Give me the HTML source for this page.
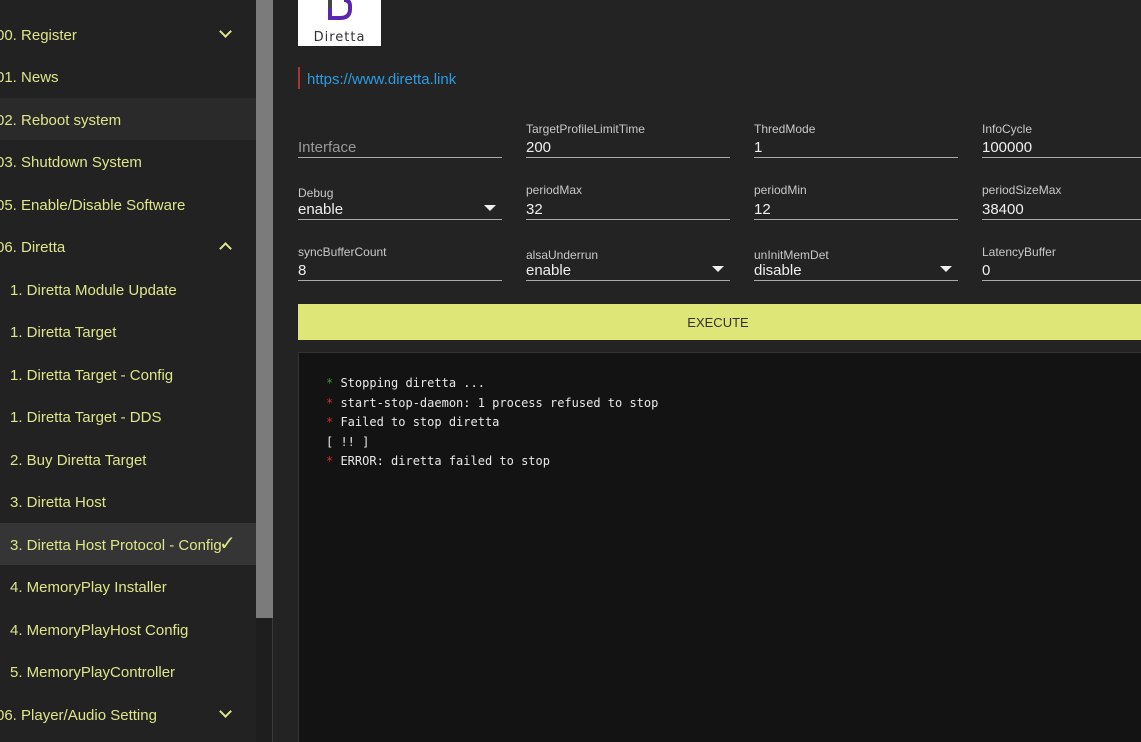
<!DOCTYPE html>
<html><head><style>
*{margin:0;padding:0;box-sizing:border-box}
html,body{width:1141px;height:742px;overflow:hidden}
body{background:#232323;font-family:"Liberation Sans",sans-serif;position:relative}
.sb{position:absolute;left:0;top:0;width:256px;height:742px;background:#222}
.it{position:absolute;left:0;width:256px;height:42px;color:#dfe58a;font-size:15px;line-height:46px;white-space:nowrap}
.chev{position:absolute;left:221px;width:9px;height:9px;border-right:2px solid #dfe58a;border-bottom:2px solid #dfe58a}
.scr{position:absolute;left:256px;top:0;width:17px;height:742px;background:#1e1e1e;border-right:1px solid #3a3a3a}
.thumb{position:absolute;left:256px;top:0;width:17px;height:618px;background:#7b7b7b}
.f{position:absolute;width:204px;border-bottom:1px solid #aaa;color:#eee}
.lab{font-size:12px;color:#c8c8c8;position:absolute;white-space:nowrap}
.val{font-size:15px;position:absolute;left:0;bottom:1px}
.tri{position:absolute;right:6px;bottom:8px;width:0;height:0;border-left:6px solid transparent;border-right:6px solid transparent;border-top:6px solid #eee}
.con{position:absolute;left:298px;top:352px;width:850px;height:390px;background:#131313;border:1px solid #333;border-bottom:none;font-family:"DejaVu Sans Mono","Liberation Mono",monospace;font-size:12px;color:#e8e8e8}
.con div{position:absolute;left:27px;white-space:pre}
.g{color:#3c9a3c}.r{color:#d03030}
</style></head><body>
<div class="sb">
<div class="it" style="top:13px;left:-4px">00. Register</div><div class="chev" style="top:27px;transform:rotate(45deg)"></div>
<div class="it" style="top:55px;left:-4px">01. News</div>
<div class="it" style="top:98px;background:#2a2a2a"><span style="margin-left:-4px">02. Reboot system</span></div>
<div class="it" style="top:140px;left:-4px">03. Shutdown System</div>
<div class="it" style="top:183px;left:-4px">05. Enable/Disable Software</div>
<div class="it" style="top:225px;left:-4px">06. Diretta</div><div class="chev" style="top:244px;transform:rotate(-135deg)"></div>
<div class="it" style="top:268px;left:10px">1. Diretta Module Update</div>
<div class="it" style="top:310px;left:10px">1. Diretta Target</div>
<div class="it" style="top:353px;left:10px">1. Diretta Target - Config</div>
<div class="it" style="top:395px;left:10px">1. Diretta Target - DDS</div>
<div class="it" style="top:438px;left:10px">2. Buy Diretta Target</div>
<div class="it" style="top:480px;left:10px">3. Diretta Host</div>
<div class="it" style="top:523px;background:#353535;line-height:42px"><span style="margin-left:10px;position:relative;top:2px">3. Diretta Host Protocol - Config</span><span style="position:absolute;left:219px;top:0;font-size:20px">✓</span></div>
<div class="it" style="top:565px;left:10px">4. MemoryPlay Installer</div>
<div class="it" style="top:608px;left:10px">4. MemoryPlayHost Config</div>
<div class="it" style="top:650px;left:10px">5. MemoryPlayController</div>
<div class="it" style="top:693px;left:-4px">06. Player/Audio Setting</div><div class="chev" style="top:707px;transform:rotate(45deg)"></div>
</div>
<div class="scr"></div><div class="thumb"></div>
<div style="position:absolute;left:298px;top:0;width:83px;height:46px;background:#fff">
<svg width="83" height="46"><path d="M32 0 V18 H42 Q52 18 52 9 V6 Q52 0 46 0" fill="none" stroke="#5b25b0" stroke-width="4"/><path d="M32 0 V8" stroke="#444" stroke-width="4"/>
<text x="41.5" y="41" text-anchor="middle" font-family="DejaVu Sans,sans-serif" font-size="13" fill="#333" letter-spacing="1">Diretta</text></svg></div>
<div style="position:absolute;left:298px;top:67px;width:2px;height:22px;background:#a33"></div>
<div style="position:absolute;left:307px;top:71px;color:#2d9be0;font-size:15px">https://www.diretta.link</div>

<div class="f" style="left:298px;top:120px;height:38px"><div class="val" style="color:#999">Interface</div></div>
<div class="f" style="left:526px;top:120px;height:38px"><div class="lab" style="top:2px">TargetProfileLimitTime</div><div class="val">200</div></div>
<div class="f" style="left:754px;top:120px;height:38px"><div class="lab" style="top:2px">ThredMode</div><div class="val">1</div></div>
<div class="f" style="left:982px;top:120px;height:38px"><div class="lab" style="top:2px">InfoCycle</div><div class="val">100000</div></div>

<div class="f" style="left:298px;top:182px;height:38px"><div class="lab" style="top:4px">Debug</div><div class="val">enable</div><div class="tri"></div></div>
<div class="f" style="left:526px;top:182px;height:38px"><div class="lab" style="top:1px">periodMax</div><div class="val">32</div></div>
<div class="f" style="left:754px;top:182px;height:38px"><div class="lab" style="top:1px">periodMin</div><div class="val">12</div></div>
<div class="f" style="left:982px;top:182px;height:38px"><div class="lab" style="top:1px">periodSizeMax</div><div class="val">38400</div></div>

<div class="f" style="left:298px;top:243px;height:38px"><div class="lab" style="top:2px">syncBufferCount</div><div class="val">8</div></div>
<div class="f" style="left:526px;top:243px;height:38px"><div class="lab" style="top:5px">alsaUnderrun</div><div class="val">enable</div><div class="tri"></div></div>
<div class="f" style="left:754px;top:243px;height:38px"><div class="lab" style="top:5px">unInitMemDet</div><div class="val">disable</div><div class="tri"></div></div>
<div class="f" style="left:982px;top:243px;height:38px"><div class="lab" style="top:2px">LatencyBuffer</div><div class="val">0</div></div>

<div style="position:absolute;left:298px;top:304px;width:850px;height:36px;background:#dee678;color:#333;font-size:13px;line-height:38px;text-align:center;padding-right:10px">EXECUTE</div>

<div class="con">
<div style="top:23px"><span class="g">*</span> Stopping diretta ...</div>
<div style="top:43px"><span class="r">*</span> start-stop-daemon: 1 process refused to stop</div>
<div style="top:62px"><span class="r">*</span> Failed to stop diretta</div>
<div style="top:82px">[ !! ]</div>
<div style="top:101px"><span class="r">*</span> ERROR: diretta failed to stop</div>
</div>
</body></html>
